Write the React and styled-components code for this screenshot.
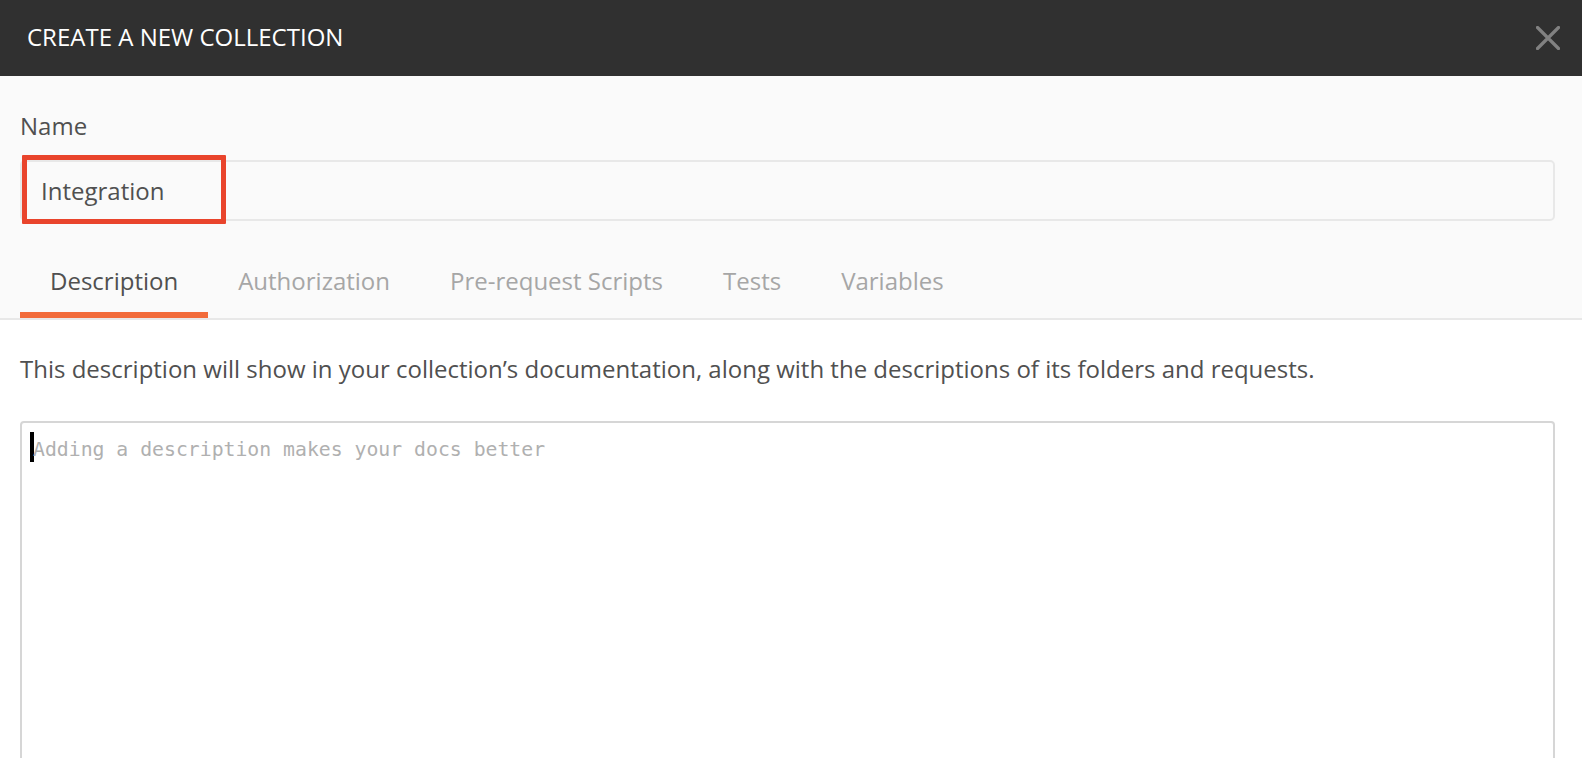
import styled, { createGlobalStyle } from 'styled-components';

const GlobalStyle = createGlobalStyle`
  * { box-sizing: border-box; }
  html, body {
    margin: 0;
    padding: 0;
    background: #ffffff;
    font-family: "Open Sans", "Liberation Sans", sans-serif;
  }
`;

const tabs = ['Description', 'Authorization', 'Pre-request Scripts', 'Tests', 'Variables'];

const CloseIcon = () => (
  <svg width="24" height="24" viewBox="0 0 24 24">
    <path d="M1.5 1.5 L22.5 22.5 M22.5 1.5 L1.5 22.5" stroke="#818181" strokeWidth="3.2" strokeLinecap="round" />
  </svg>
);

const App = () => {
  return (
    <>
      <GlobalStyle />
      <Modal>
        <Header>
          <Title>CREATE A NEW COLLECTION</Title>
          <CloseButton type="button" aria-label="close">
            <CloseIcon />
          </CloseButton>
        </Header>

        <TopPanel>
          <Label>Name</Label>
          <InputWrap>
            <NameInput defaultValue="Integration" />
            <Highlight />
          </InputWrap>
        </TopPanel>

        <TabBar>
          {tabs.map((t, i) => (
            <Tab key={t} $active={i === 0}>{t}</Tab>
          ))}
        </TabBar>

        <Content>
          <Hint>
            This description will show in your collection’s documentation, along with the descriptions of its folders and requests.
          </Hint>
          <Editor>
            <EditorLine>
              <Caret />
              <Placeholder>Adding a description makes your docs better</Placeholder>
            </EditorLine>
          </Editor>
        </Content>
      </Modal>
    </>
  );
};

const Modal = styled.div`
  height: 100vh;
  overflow: hidden;
  display: flex;
  flex-direction: column;
  background: #ffffff;
`;

const Header = styled.header`
  height: 76px;
  flex-shrink: 0;
  background: #303030;
  display: flex;
  align-items: center;
  justify-content: space-between;
  padding: 0 22px 3px 27px;
`;

const Title = styled.h1`
  margin: 0;
  color: #ffffff;
  font-size: 24px;
  font-weight: 400;
  line-height: 32px;
`;

const CloseButton = styled.button`
  border: 0;
  background: none;
  padding: 0;
  margin-top: 3px;
  display: flex;
  cursor: pointer;
`;

const TopPanel = styled.div`
  background: #fafafa;
  padding: 34px 27px 0 20px;
`;

const Label = styled.div`
  color: #505050;
  font-size: 24px;
  line-height: 32px;
  margin-bottom: 18px;
`;

const InputWrap = styled.div`
  position: relative;
`;

const NameInput = styled.input`
  display: block;
  width: 100%;
  height: 61px;
  border: 2px solid #e8e8e8;
  border-radius: 5px;
  background: #fafafa;
  padding: 0 19px;
  font-family: "Open Sans", "Liberation Sans", sans-serif;
  font-size: 24px;
  color: #505050;
  outline: none;
`;

const Highlight = styled.div`
  position: absolute;
  left: 2px;
  top: -5px;
  width: 204px;
  height: 69px;
  border: 5px solid #e9442c;
  border-radius: 1px;
  pointer-events: none;
`;

const TabBar = styled.nav`
  display: flex;
  background: #fafafa;
  padding: 20px 0 0 20px;
  border-bottom: 2px solid #e8e8e8;
`;

const Tab = styled.div`
  padding: 24px 30px 15px;
  font-size: 24px;
  line-height: 32px;
  color: ${p => (p.$active ? '#505050' : '#a6a6a6')};
  border-bottom: 6px solid ${p => (p.$active ? '#f26b3a' : 'transparent')};
  white-space: nowrap;
  cursor: pointer;
`;

const Content = styled.section`
  flex: 1;
  padding: 33px 27px 0 20px;
  background: #ffffff;
`;

const Hint = styled.p`
  margin: 0 0 36px;
  color: #505050;
  font-size: 24px;
  line-height: 32px;
  white-space: nowrap;
`;

const Editor = styled.div`
  height: 420px;
  border: 2px solid #d6d6d6;
  border-radius: 4px;
  padding: 9px 8px;
`;

const EditorLine = styled.div`
  display: flex;
  align-items: flex-start;
`;

const Caret = styled.span`
  width: 4px;
  height: 30px;
  background: #000000;
  flex-shrink: 0;
`;

const Placeholder = styled.span`
  margin-left: -1px;
  padding-top: 3px;
  font-family: "DejaVu Sans Mono", "Liberation Mono", monospace;
  font-size: 19.8px;
  line-height: 30px;
  color: #b0b0b0;
  white-space: nowrap;
`;

export default App;
